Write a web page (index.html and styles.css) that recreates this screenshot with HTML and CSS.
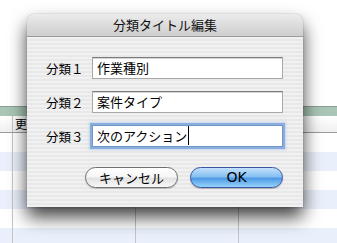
FILE: index.html
```html
<!DOCTYPE html>
<html lang="ja">
<head>
<meta charset="utf-8">
<title>分類タイトル編集</title>
<link rel="stylesheet" href="styles.css">
</head>
<body>
<div class="screen">
  <div class="backdrop">
    <div class="blank"></div>
    <div class="greenbar"></div>
    <div class="table">
      <div class="hrow"><div class="c c1"></div><div class="c c2">更新</div><div class="c c3"></div><div class="c c4"></div><div class="c c5"></div></div>
      <div class="row"><div class="c c1"></div><div class="c c2"></div><div class="c c3"></div><div class="c c4"></div><div class="c c5"></div></div>
      <div class="row alt"><div class="c c1"></div><div class="c c2"></div><div class="c c3"></div><div class="c c4"></div><div class="c c5"></div></div>
      <div class="row"><div class="c c1"></div><div class="c c2"></div><div class="c c3"></div><div class="c c4"></div><div class="c c5"></div></div>
      <div class="row alt"><div class="c c1"></div><div class="c c2"></div><div class="c c3"></div><div class="c c4"></div><div class="c c5"></div></div>
      <div class="row"><div class="c c1"></div><div class="c c2"></div><div class="c c3"></div><div class="c c4"></div><div class="c c5"></div></div>
      <div class="row alt"><div class="c c1"></div><div class="c c2"></div><div class="c c3"></div><div class="c c4"></div><div class="c c5"></div></div>
    </div>
  </div>

  <div class="dialog">
    <div class="titlebar">分類タイトル編集</div>
    <div class="dbody">
      <div class="frow">
        <span class="label">分類１</span>
        <div class="field">作業種別</div>
      </div>
      <div class="frow">
        <span class="label">分類２</span>
        <div class="field">案件タイプ</div>
      </div>
      <div class="frow">
        <span class="label">分類３</span>
        <div class="field focus"><span class="caret">次のアクション</span></div>
      </div>
      <div class="buttons">
        <div class="btn cancel">キャンセル</div>
        <div class="btn ok">OK</div>
      </div>
    </div>
  </div>
</div>
</body>
</html>
```

FILE: styles.css
```css
html, body {
  margin: 0;
  padding: 0;
  background: #ffffff;
}
body {
  font-family: "Noto Sans CJK JP", "Noto Sans", sans-serif;
}
.screen {
  position: relative;
  width: 337px;
  height: 243px;
  overflow: hidden;
  background: #ffffff;
}
.backdrop {
  display: flex;
  flex-direction: column;
}
.blank {
  height: 106px;
}
.greenbar {
  height: 9px;
  border-top: 1px solid #8e9c94;
  background: #a9c5b5;
}
.table {
  display: flex;
  flex-direction: column;
}
.hrow, .row {
  display: flex;
}
.hrow {
  height: 16px;
  border-bottom: 1px solid #9a9a9a;
  background: linear-gradient(#ffffff, #f0f0f0);
}
.row {
  height: 19px;
}
.row.alt {
  background: #e9effb;
}
.c {
  box-sizing: border-box;
  height: 100%;
  border-right: 1px solid #c4c4c4;
}
.c1 { width: 13px; }
.c2 {
  width: 123px;
  font-size: 12px;
  line-height: 15px;
  padding-left: 2px;
  overflow: hidden;
  white-space: nowrap;
  color: #000;
}
.c3 { width: 103px; }
.c4 { width: 98px; border-right: none; }
.c5 { flex: 1; border-right: none; }

.dialog {
  position: absolute;
  left: 27px;
  top: 14px;
  width: 276px;
  height: 193px;
  border-radius: 7px 7px 0 0;
  background: #ededed;
  box-shadow: 0 10px 18px rgba(0, 0, 0, 0.75), 0 0 1px rgba(0, 0, 0, 0.5);
  display: flex;
  flex-direction: column;
  overflow: hidden;
}
.titlebar {
  height: 22px;
  border-bottom: 1px solid #9c9c9c;
  background: linear-gradient(#ececec, #d9d9d9 60%, #cfcfcf);
  font-size: 13px;
  line-height: 22px;
  text-align: center;
  color: #111;
}
.dbody {
  flex: 1;
  background: repeating-linear-gradient(#f1f1f1 0px, #f1f1f1 2px, #e8e8e8 2px, #e8e8e8 4px);
  padding: 20px 20px 0 19px;
  display: flex;
  flex-direction: column;
  gap: 12px;
}
.frow {
  display: flex;
  align-items: center;
  gap: 9px;
  height: 22px;
}
.label {
  width: 37px;
  font-size: 12.5px;
  color: #000;
  white-space: nowrap;
}
.field {
  box-sizing: border-box;
  flex: 1;
  height: 22px;
  background: #ffffff;
  border: 1px solid #a8a8a8;
  border-top-color: #7c7c7c;
  box-shadow: inset 0 1px 0 #d6d6d6;
  font-size: 13px;
  line-height: 20px;
  padding-left: 4px;
  color: #000;
  white-space: nowrap;
}
.field.focus {
  border: 1px solid #6f97cd;
  box-shadow: 0 0 0 2px rgba(120, 160, 215, 0.75), 0 0 2px 3px rgba(150, 185, 230, 0.5);
}
.caret {
  border-right: 1px solid #000;
  padding-right: 1px;
}
.buttons {
  display: flex;
  justify-content: flex-end;
  gap: 12px;
  margin-top: 8px;
}
.btn {
  box-sizing: border-box;
  width: 93px;
  height: 21px;
  border-radius: 11px;
  font-size: 13px;
  line-height: 19px;
  text-align: center;
  color: #000;
}
.cancel {
  border: 1px solid #707070;
  background: linear-gradient(#ffffff 0%, #f6f6f6 45%, #e2e2e2 55%, #f8f8f8 100%);
  box-shadow: 0 1px 1px rgba(0, 0, 0, 0.2);
}
.ok {
  border: 1px solid #3c55a0;
  background: linear-gradient(#c2e2fb 0%, #86c0f3 45%, #4f9ae6 55%, #96d4fc 100%);
  box-shadow: 0 1px 1px rgba(0, 0, 0, 0.25);
  font-family: "DejaVu Sans", "Liberation Sans", sans-serif;
  font-size: 14px;
}
```
